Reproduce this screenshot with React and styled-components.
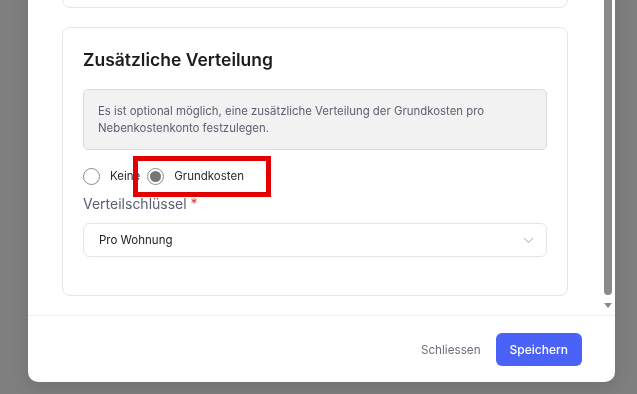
import React, { useState } from "react";
import styled, { createGlobalStyle } from "styled-components";

const GlobalStyle = createGlobalStyle`
  html, body {
    margin: 0;
    padding: 0;
    font-family: Inter, "Open Sans", "Liberation Sans", sans-serif;
    color: #222;
  }
`;

const Backdrop = styled.div`
  position: fixed;
  inset: 0;
  background: #7f7f7f;
  display: flex;
  align-items: flex-end;
  justify-content: flex-start;
  padding: 0 0 12px 28px;
  box-sizing: border-box;
`;

const Modal = styled.div`
  width: 587px;
  height: 560px;
  flex-shrink: 0;
  background: #fff;
  border-radius: 10px;
  display: flex;
  flex-direction: column;
  overflow: hidden;
  box-shadow: 0 6px 18px rgba(20, 20, 40, 0.12);
`;

const BodyWrap = styled.div`
  flex: 1;
  min-height: 0;
  display: flex;
`;

// content is kept scrolled to the end, so it overflows at the top
const Body = styled.div`
  flex: 1;
  min-width: 0;
  overflow: hidden;
  padding: 0 32px 19px 34px;
  display: flex;
  flex-direction: column;
  justify-content: flex-end;
  gap: 19px;
`;

const ScrollTrack = styled.div`
  width: 15px;
  flex-shrink: 0;
  display: flex;
  flex-direction: column;
  background: #fff;
`;

const Thumb = styled.div`
  flex: 1;
  margin: 0 3px 1px 4px;
  background: #8a8a8a;
  border-radius: 0 0 4px 4px;
`;

const ArrowDown = styled.div`
  height: 19px;
  display: flex;
  align-items: center;
  justify-content: center;
  padding-left: 1px;
  &::after {
    content: "";
    width: 0;
    height: 0;
    border-left: 4px solid transparent;
    border-right: 4px solid transparent;
    border-top: 5px solid #8a8a8a;
  }
`;

const Card = styled.section`
  flex-shrink: 0;
  border: 1px solid #e6e6e6;
  border-radius: 8px;
  padding: 20px 20px ${(p) => p.$bottom || 20}px;
  display: flex;
  flex-direction: column;
  ${(p) => (p.$height ? `height: ${p.$height}px; box-sizing: border-box;` : "")}
`;

const Heading = styled.h2`
  margin: 0 0 17px;
  font-size: 17.5px;
  line-height: 24px;
  font-weight: 600;
  color: #1c1c1e;
`;

const InfoBox = styled.div`
  background: #f2f2f2;
  border: 1px solid #dcdcdc;
  border-radius: 5px;
  padding: 13px 14px;
  font-size: 11.4px;
  line-height: 16.5px;
  color: #5c6170;
`;

const RadioRow = styled.div`
  position: relative;
  margin-top: 16px;
  height: 20px;
  display: flex;
  align-items: center;
`;

const RadioOption = styled.label`
  display: flex;
  align-items: center;
  gap: 10px;
  margin-right: ${(p) => p.$spacing || 0}px;
  font-size: 11.5px;
  color: #2a2a2e;
  cursor: pointer;
`;

const RadioDot = styled.span`
  width: 17px;
  height: 17px;
  box-sizing: border-box;
  border-radius: 50%;
  border: 1px solid #8c8c8c;
  background: #fff;
  display: flex;
  align-items: center;
  justify-content: center;
  &::after {
    content: "";
    width: 11px;
    height: 11px;
    border-radius: 50%;
    background: ${(p) => (p.$checked ? "#767676" : "transparent")};
  }
`;

const Highlight = styled.div`
  position: absolute;
  left: 50px;
  top: -10px;
  width: 138px;
  height: 41px;
  box-sizing: border-box;
  border: 5px solid #e30000;
  pointer-events: none;
`;

const Label = styled.div`
  margin-top: 8px;
  font-size: 14px;
  line-height: 20px;
  color: #5a6072;
  span {
    color: #e53935;
  }
`;

const Select = styled.div`
  margin-top: 9px;
  height: 34px;
  box-sizing: border-box;
  border: 1px solid #e4e4ea;
  border-radius: 6px;
  padding: 0 12px 0 15px;
  display: flex;
  align-items: center;
  justify-content: space-between;
  font-size: 11.5px;
  color: #222;
`;

const Chevron = () => (
  <svg width="11" height="7" viewBox="0 0 11 7" fill="none">
    <path d="M1 1l4.5 4.5L10 1" stroke="#c3c6d4" strokeWidth="1.2" />
  </svg>
);

const Footer = styled.footer`
  flex-shrink: 0;
  border-top: 1px solid #f1f1f1;
  padding: 17px 33px 16px;
  display: flex;
  justify-content: flex-end;
  align-items: center;
  gap: 15px;
`;

const Button = styled.button`
  font-family: inherit;
  font-size: ${(p) => (p.$primary ? 12 : 11.7)}px;
  height: 33px;
  padding: 0 ${(p) => (p.$primary ? 14 : 0)}px;
  border: none;
  border-radius: 6px;
  cursor: pointer;
  background: ${(p) => (p.$primary ? "#4a62f8" : "transparent")};
  color: ${(p) => (p.$primary ? "#fff" : "#6b6f7b")};
  font-weight: ${(p) => (p.$primary ? 500 : 400)};
`;

const App = () => {
  const [choice, setChoice] = useState("grund");

  return (
    <>
      <GlobalStyle />
      <Backdrop>
        <Modal>
          <BodyWrap>
            <Body>
              <Card $height={240} />
              <Card $bottom={38}>
                <Heading>Zusätzliche Verteilung</Heading>
                <InfoBox>
                  Es ist optional möglich, eine zusätzliche Verteilung der
                  Grundkosten pro Nebenkostenkonto festzulegen.
                </InfoBox>
                <RadioRow>
                  <RadioOption $spacing={7} onClick={() => setChoice("keine")}>
                    <RadioDot $checked={choice === "keine"} />
                    Keine
                  </RadioOption>
                  <RadioOption onClick={() => setChoice("grund")}>
                    <RadioDot $checked={choice === "grund"} />
                    Grundkosten
                  </RadioOption>
                  <Highlight />
                </RadioRow>
                <Label>
                  Verteilschlüssel <span>*</span>
                </Label>
                <Select>
                  Pro Wohnung
                  <Chevron />
                </Select>
              </Card>
            </Body>
            <ScrollTrack>
              <Thumb />
              <ArrowDown />
            </ScrollTrack>
          </BodyWrap>
          <Footer>
            <Button>Schliessen</Button>
            <Button $primary>Speichern</Button>
          </Footer>
        </Modal>
      </Backdrop>
    </>
  );
};

export default App;
